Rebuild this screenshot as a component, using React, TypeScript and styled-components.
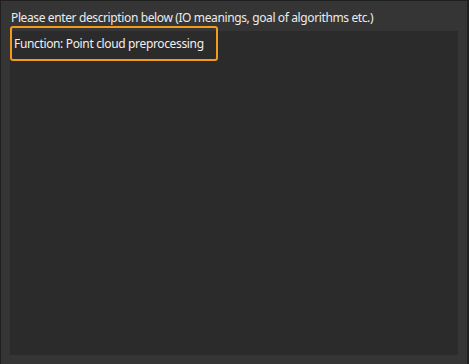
import React from "react";
import styled, { createGlobalStyle } from "styled-components";

const GlobalStyle = createGlobalStyle`
  html, body {
    margin: 0;
    padding: 0;
    background: #1e1e1e;
  }
  #root {
    width: 469px;
    height: 364px;
  }
`;

const Panel = styled.div`
  position: relative;
  box-sizing: border-box;
  width: 469px;
  height: 364px;
  background: #353535;
  border-top: 1px solid #1f1f1f;
  border-left: 1px solid #1f1f1f;
  border-right: 2px solid #1f1f1f;
  padding: 0 9px 9px 9px;
  display: flex;
  flex-direction: column;
  font-family: "Noto Sans", "Open Sans", sans-serif;
`;

const Label = styled.div`
  height: 30px;
  box-sizing: border-box;
  padding: 9px 0 0 1px;
  font-size: 12px;
  line-height: 16px;
  letter-spacing: -0.38px;
  color: #ececec;
  white-space: nowrap;
`;

const Editor = styled.div`
  flex: 1;
  background: #2b2b2b;
`;

const Highlight = styled.div`
  position: absolute;
  left: 9px;
  top: 25px;
  width: 202px;
  height: 31px;
  border: 2px solid #f29b1d;
  border-radius: 3px;
  display: flex;
  align-items: center;
  padding-left: 2px;
  font-size: 12px;
  letter-spacing: -0.35px;
  color: #f0f0f0;
  white-space: nowrap;
`;

const App: React.FC = () => {
  return (
    <>
      <GlobalStyle />
      <Panel>
        <Label>Please enter description below (IO meanings, goal of algorithms etc.)</Label>
        <Editor />
        <Highlight>Function: Point cloud preprocessing</Highlight>
      </Panel>
    </>
  );
};

export default App;
